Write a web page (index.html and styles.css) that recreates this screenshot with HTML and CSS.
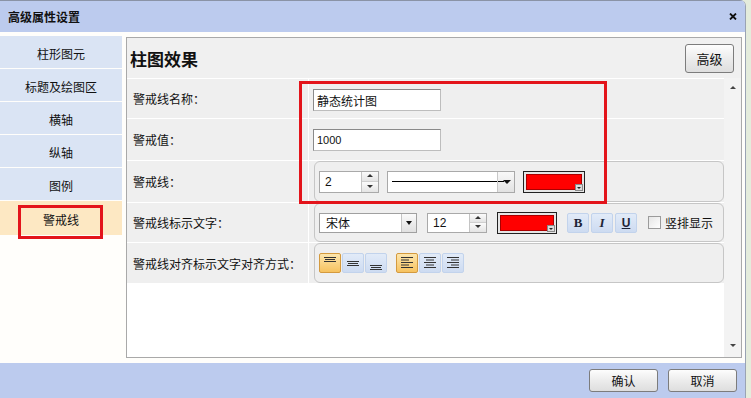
FILE: index.html
```html
<!DOCTYPE html>
<html lang="zh">
<head>
<meta charset="utf-8">
<title>高级属性设置</title>
<link rel="stylesheet" href="styles.css">
</head>
<body>
<div class="dialog">
  <div class="titlebar">
    <span class="title">高级属性设置</span>
    <svg class="close" width="8" height="7" viewBox="0 0 8 7"><path d="M1 0.5 L7 6.5 M7 0.5 L1 6.5" stroke="#111" stroke-width="1.8"/></svg>
  </div>
  <div class="content">
    <nav class="nav">
      <div class="nav-item">柱形图元</div>
      <div class="nav-item">标题及绘图区</div>
      <div class="nav-item">横轴</div>
      <div class="nav-item">纵轴</div>
      <div class="nav-item">图例</div>
      <div class="nav-item active">警戒线</div>
    </nav>
    <section class="panel">
      <header class="panel-head">
        <h1 class="panel-title">柱图效果</h1>
        <button class="btn btn-adv">高级</button>
      </header>
      <div class="panel-body">
        <div class="rows">
          <div class="row row-1">
            <div class="label">警戒线名称：</div>
            <div class="value"><div class="input">静态统计图</div></div>
          </div>
          <div class="row row-2">
            <div class="label">警戒值：</div>
            <div class="value"><div class="input input-num">1000</div></div>
          </div>
          <div class="row row-3">
            <div class="label">警戒线：</div>
            <div class="value">
              <div class="group">
                <div class="spinner spinner-lg">
                  <span class="spin-text">2</span>
                  <span class="spin-btns"><span class="spin-up"></span><span class="spin-down"></span></span>
                </div>
                <div class="linesel">
                  <span class="linesel-track"></span>
                  <span class="linesel-btn"><span class="tri-down"></span></span>
                </div>
                <div class="color color-lg"><span class="color-fill"></span><span class="color-arrow"></span></div>
              </div>
            </div>
          </div>
          <div class="row row-4">
            <div class="label">警戒线标示文字：</div>
            <div class="value">
              <div class="group group-4">
                <div class="select">
                  <span class="select-text">宋体</span>
                  <span class="select-btn"><span class="tri-down"></span></span>
                </div>
                <div class="spinner">
                  <span class="spin-text">12</span>
                  <span class="spin-btns"><span class="spin-up"></span><span class="spin-down"></span></span>
                </div>
                <div class="color"><span class="color-fill"></span><span class="color-arrow"></span></div>
                <div class="tbtns">
                  <span class="tbtn fmt-b">B</span>
                  <span class="tbtn fmt-i">I</span>
                  <span class="tbtn fmt-u">U</span>
                </div>
                <label class="check"><span class="checkbox"></span>竖排显示</label>
              </div>
            </div>
          </div>
          <div class="row row-5">
            <div class="label">警戒线对齐标示文字对齐方式：</div>
            <div class="value">
              <div class="group">
                <div class="tbtns">
                  <span class="tbtn on"><svg width="12" height="14" viewBox="0 0 12 14"><path d="M0 1.5H12M1 3.5H11M0 5.5H12" stroke="#333" stroke-width="1"/></svg></span>
                  <span class="tbtn"><svg width="12" height="14" viewBox="0 0 12 14"><path d="M0 5.5H12M1 7.5H11M0 9.5H12" stroke="#333" stroke-width="1"/></svg></span>
                  <span class="tbtn"><svg width="12" height="14" viewBox="0 0 12 14"><path d="M0 9.5H12M1 11.5H11M0 13.5H12" stroke="#333" stroke-width="1"/></svg></span>
                </div>
                <div class="tbtns tbtns-2">
                  <span class="tbtn on"><svg width="12" height="12" viewBox="0 0 12 12"><path d="M0 0.5H12M0 3H8M0 5.5H12M0 8H8M0 10.5H12" stroke="#333" stroke-width="1"/></svg></span>
                  <span class="tbtn"><svg width="12" height="12" viewBox="0 0 12 12"><path d="M0 0.5H12M2 3H10M0 5.5H12M2 8H10M0 10.5H12" stroke="#333" stroke-width="1"/></svg></span>
                  <span class="tbtn"><svg width="12" height="12" viewBox="0 0 12 12"><path d="M0 0.5H12M4 3H12M0 5.5H12M4 8H12M0 10.5H12" stroke="#333" stroke-width="1"/></svg></span>
                </div>
              </div>
            </div>
          </div>
        </div>
        <div class="scrollbar">
          <span class="sb-arrow sb-up"></span>
          <span class="sb-arrow sb-down"></span>
        </div>
      </div>
    </section>
  </div>
  <footer class="footer">
    <button class="btn btn-foot">确认</button>
    <button class="btn btn-foot">取消</button>
  </footer>
  <div class="mark mark-nav"></div>
  <div class="mark mark-form"></div>
</div>
</body>
</html>
```

FILE: styles.css
```css
* { box-sizing: border-box; }
html, body { margin: 0; padding: 0; }
body {
  width: 751px;
  height: 398px;
  overflow: hidden;
  background: #e4ecdc;
  font-family: "Noto Sans CJK SC", "Liberation Sans", sans-serif;
  font-size: 12px;
  color: #111;
}
.dialog {
  position: relative;
  width: 746px;
  height: 398px;
  display: flex;
  flex-direction: column;
  background: #fffefb;
  border-right: 1px solid #9aa3b3;
  border-top-right-radius: 6px;
  overflow: hidden;
}
.titlebar {
  height: 32px;
  flex: none;
  background: #bccbee;
  border-top: 1px solid #8a93a6;
  display: flex;
  align-items: center;
  justify-content: space-between;
  padding: 0 8px 0 8px;
}
.title { font-weight: bold; font-size: 12px; }
.close { margin-top: -1px; }
.content {
  flex: 1;
  display: flex;
  padding-top: 4px;
  min-height: 0;
}
.nav {
  width: 122px;
  flex: none;
  display: flex;
  flex-direction: column;
  gap: 1px;
}
.nav-item {
  height: 32px;
  background: #dae4f4;
  display: flex;
  align-items: center;
  justify-content: center;
  padding-top: 2px;
  font-size: 12px;
}
.nav-item.active { background: #fde8c3; height: 34px; }
.panel {
  margin: 1px 0 5px 4px;
  width: 616px;
  height: 321px;
  border: 1px solid #a9a9a9;
  background: #fff;
  display: flex;
  flex-direction: column;
}
.panel-head {
  height: 40px;
  flex: none;
  background: #f0f0f0;
  margin-bottom: 1px;
  display: flex;
  align-items: center;
  justify-content: space-between;
  padding: 0 7px 0 3px;
}
.panel-title {
  margin: 0;
  font-size: 17px;
  font-weight: bold;
  line-height: 1;
}
.btn {
  font-family: inherit;
  font-size: 12px;
  color: #111;
  border: 1px solid #7c7c7c;
  border-radius: 3px;
  background: linear-gradient(#fdfdfd, #ececec 50%, #dedede);
  padding: 0;
  display: flex;
  align-items: center;
  justify-content: center;
}
.btn-adv { width: 49px; height: 29px; font-size: 13px; }
.panel-body {
  flex: 1;
  display: flex;
  min-height: 0;
}
.rows {
  width: 597px;
  display: flex;
  flex-direction: column;
  gap: 1px;
  background: #fff;
}
.row {
  display: flex;
  gap: 1px;
  background: #fff;
}
.row-1 { height: 39px; }
.row-2 { height: 41px; }
.row-3 { height: 41px; }
.row-4 { height: 39px; }
.row-5 { height: 40px; }
.label {
  width: 181px;
  flex: none;
  background: #efefef;
  display: flex;
  align-items: center;
  padding-left: 6px;
}
.value {
  flex: 1;
  background: #efefef;
  display: flex;
  align-items: center;
  padding-left: 4px;
}
.input {
  width: 128px;
  height: 22px;
  border: 1px solid #8a8a8a;
  border-right-color: #bdbdbd;
  border-bottom-color: #bdbdbd;
  background: #fff;
  display: flex;
  align-items: center;
  padding-left: 3px;
  font-size: 12px;
}
.input-num { font-family: "Liberation Sans", sans-serif; font-size: 11px; }
.row-1 .input { margin-top: 3px; }
.group {
  margin-left: 1px;
  flex: 1;
  height: 100%;
  border: 1px solid #c6c6c6;
  border-radius: 6px;
  background: #efefef;
  display: flex;
  align-items: center;
  padding-left: 4px;
}
.row-3 .group { gap: 8px; }
.group-4 { gap: 10px; }
.spinner {
  width: 60px;
  height: 20px;
  border: 1px solid #a9a9a9;
  background: #fff;
  display: flex;
}
.spinner-lg { height: 22px; }
.spin-text {
  flex: 1;
  display: flex;
  align-items: center;
  padding-left: 5px;
  font-family: "Liberation Sans", sans-serif;
  font-size: 12px;
}
.spin-btns {
  width: 17px;
  display: flex;
  flex-direction: column;
  border-left: 1px solid #c4c4c4;
}
.spin-up, .spin-down {
  flex: 1;
  position: relative;
  background: linear-gradient(#fbfbfb, #e4e4e4);
}
.spin-up { border-bottom: 1px solid #cfcfcf; }
.spin-up::after, .spin-down::after {
  content: "";
  position: absolute;
  left: 5px;
  top: 50%;
  margin-top: -2px;
  border-left: 3px solid transparent;
  border-right: 3px solid transparent;
}
.spin-up::after { border-bottom: 3px solid #333; }
.spin-down::after { border-top: 3px solid #333; }
.linesel {
  width: 128px;
  height: 22px;
  border: 1px solid #a9a9a9;
  background: #fff;
  display: flex;
}
.linesel-track {
  flex: 1;
  background: linear-gradient(#fff 9px, #000 9px, #000 10px, #fff 10px);
  margin-left: 4px;
}
.linesel-btn {
  width: 17px;
  background: linear-gradient(#000, #000) left 9px / 6px 1px no-repeat, linear-gradient(#f9f9f9, #e2e2e2);
  border-left: 1px solid #c8c8c8;
  display: flex;
  align-items: center;
  justify-content: center;
}
.tri-down {
  width: 0;
  height: 0;
  border-left: 4px solid transparent;
  border-right: 4px solid transparent;
  border-top: 4px solid #111;
  margin-left: 2px;
}
.color {
  position: relative;
  width: 60px;
  height: 22px;
  border: 1px solid #222;
  background: #e6e6e6;
  padding: 2px;
  display: flex;
}
.color-lg { width: 62px; }
.color-fill {
  flex: 1;
  background: #ff0000;
  border: 1px solid #a00;
}
.color-arrow {
  position: absolute;
  right: 1px;
  bottom: 1px;
  width: 8px;
  height: 7px;
  background: #dcdcdc;
  border: 1px solid #8a8a8a;
}
.color-arrow::after {
  content: "";
  position: absolute;
  left: 1px;
  top: 2px;
  border-left: 2px solid transparent;
  border-right: 2px solid transparent;
  border-top: 2px solid #222;
}
.select {
  width: 98px;
  height: 20px;
  border: 1px solid #a0a0a0;
  background: #fff;
  display: flex;
}
.select-text {
  flex: 1;
  display: flex;
  align-items: center;
  padding-left: 6px;
}
.select-btn {
  width: 15px;
  border-left: 1px solid #c4c4c4;
  background: linear-gradient(#fafafa, #e0e0e0);
  display: flex;
  align-items: center;
  justify-content: center;
}
.select-btn .tri-down { margin-left: 0; border-left-width: 3px; border-right-width: 3px; }
.tbtns { display: flex; gap: 1px; }
.tbtns-2 { margin-left: 9px; }
.tbtn {
  width: 22px;
  height: 20px;
  border: 1px solid #c2d3ec;
  border-radius: 2px;
  background: linear-gradient(#e2ebf8, #cddbf1);
  display: flex;
  align-items: center;
  justify-content: center;
  color: #1d2436;
  font-family: "Liberation Serif", serif;
  font-weight: bold;
  font-size: 13px;
  line-height: 1;
}
.tbtn.on {
  border-color: #d49a3e;
  background: linear-gradient(#fde6ad, #f6c25f);
}
.fmt-i { font-style: italic; }
.fmt-u { text-decoration: underline; font-family: "Liberation Sans", sans-serif; font-size: 12px; }
.group-4 .tbtns { gap: 2px; }
.check {
  display: flex;
  align-items: center;
  gap: 4px;
  margin-left: 1px;
  font-size: 12px;
}
.checkbox {
  width: 13px;
  height: 13px;
  border: 1px solid #9b9b9b;
  background: linear-gradient(135deg, #e6e6e6, #fff);
}
.scrollbar {
  flex: 1;
  background: #f3f3f3;
  margin-top: -1px;
  display: flex;
  flex-direction: column;
  justify-content: space-between;
  align-items: center;
  padding: 8px 0 10px;
}
.sb-arrow { width: 0; height: 0; border-left: 3px solid transparent; border-right: 3px solid transparent; }
.sb-up { border-bottom: 3px solid #444; }
.sb-down { border-top: 3px solid #444; }
.footer {
  height: 35px;
  flex: none;
  background: #bccbee;
  display: flex;
  justify-content: flex-end;
  align-items: flex-start;
  gap: 10px;
  padding: 6px 8px 0 0;
}
.btn-foot { width: 69px; height: 23px; }
.mark {
  position: absolute;
  border: 3px solid #e3141b;
  pointer-events: none;
}
.mark-nav { left: 18px; top: 205px; width: 85px; height: 34px; }
.mark-form { left: 299px; top: 81px; width: 308px; height: 123px; }
```
